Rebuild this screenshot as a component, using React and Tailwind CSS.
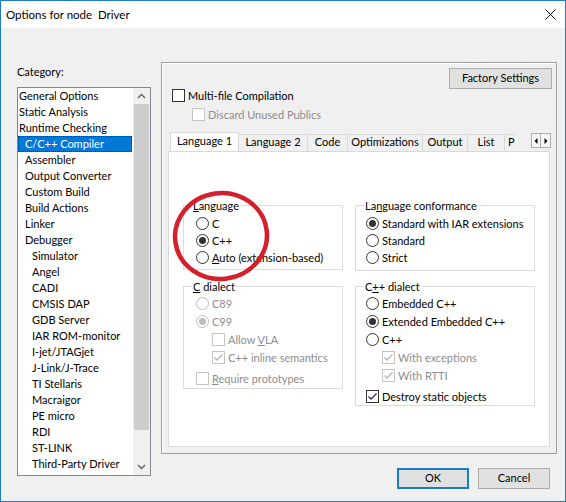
import React from "react";

// category list entries: [label, indent level, selected]
const categories = [
  ["General Options", 0],
  ["Static Analysis", 0],
  ["Runtime Checking", 0],
  ["C/C++ Compiler", 1, true],
  ["Assembler", 1],
  ["Output Converter", 1],
  ["Custom Build", 1],
  ["Build Actions", 1],
  ["Linker", 1],
  ["Debugger", 1],
  ["Simulator", 2],
  ["Angel", 2],
  ["CADI", 2],
  ["CMSIS DAP", 2],
  ["GDB Server", 2],
  ["IAR ROM-monitor", 2],
  ["I-jet/JTAGjet", 2],
  ["J-Link/J-Trace", 2],
  ["TI Stellaris", 2],
  ["Macraigor", 2],
  ["PE micro", 2],
  ["RDI", 2],
  ["ST-LINK", 2],
  ["Third-Party Driver", 2],
];

const indents = ["pl-[1px]", "pl-[7px]", "pl-[14px]"];

// inactive tabs after the selected one
const tabs = [
  ["Language 2", "w-[69px]"],
  ["Code", "w-[40px]"],
  ["Optimizations", "w-[75px]"],
  ["Output", "w-[45px]"],
  ["List", "w-[37px]"],
];

function Radio({ checked, disabled }) {
  return (
    <span
      className={
        disabled
          ? "flex h-[13px] w-[13px] shrink-0 items-center justify-center rounded-full border border-[#bcbcbc] bg-white"
          : "flex h-[13px] w-[13px] shrink-0 items-center justify-center rounded-full border border-[#333333] bg-white"
      }
    >
      {checked && (
        <span
          className={
            disabled
              ? "h-[7px] w-[7px] rounded-full bg-[#bcbcbc]"
              : "h-[7px] w-[7px] rounded-full bg-[#333333]"
          }
        />
      )}
    </span>
  );
}

function Check({ checked, disabled }) {
  return (
    <span
      className={
        disabled
          ? "flex h-[13px] w-[13px] shrink-0 items-center justify-center border border-[#c4c4c4] bg-white"
          : "flex h-[13px] w-[13px] shrink-0 items-center justify-center border border-[#333333] bg-white"
      }
    >
      {checked && (
        <svg width="11" height="11" viewBox="0 0 11 11">
          <polyline
            points="1.5,5.5 4,8 9.5,2.5"
            fill="none"
            stroke={disabled ? "#b4b4b4" : "#333333"}
            strokeWidth="1.3"
          />
        </svg>
      )}
    </span>
  );
}

function Row({ control, children, className }) {
  return (
    <div className={`flex items-center gap-[3px] whitespace-nowrap ${className}`}>
      {control}
      <span className="leading-[15px]">{children}</span>
    </div>
  );
}

function App() {
  return (
    <div className="relative flex h-[502px] w-[566px] flex-col border border-[#1f7bd1] bg-[#f0f0f0] font-['Lato','Noto_Sans',sans-serif] text-[11px] text-black">
      {/* title bar */}
      <div className="flex h-[27px] shrink-0 items-center justify-between bg-white pl-[5px] pr-[9px]">
        <span className="text-[11.5px]">Options for node&nbsp; Driver</span>
        <svg width="11" height="11" viewBox="0 0 11 11">
          <path d="M0.5 0.5 L10.5 10.5 M10.5 0.5 L0.5 10.5" stroke="#111" strokeWidth="1" />
        </svg>
      </div>

      {/* dialog body */}
      <div className="flex flex-1 pl-[16px]">
        {/* category column */}
        <div className="flex w-[134px] flex-col pt-[36px]">
          <span className="leading-[15px]">Category:</span>
          <div className="mt-[8px] flex h-[389px] border border-[#828790] bg-white">
            <div className="flex w-[115px] flex-col">
              {categories.map(([label, level, selected]) =>
                selected ? (
                  <div
                    key={label}
                    className="h-[16px] w-[114px] bg-[#0078d7] pl-[7px] leading-[16px] text-white outline-1 -outline-offset-1 outline-dotted outline-[#0d3463]"
                  >
                    {label}
                  </div>
                ) : (
                  <div key={label} className={`h-[16px] whitespace-nowrap leading-[16px] ${indents[level]}`}>
                    {label}
                  </div>
                )
              )}
            </div>
            {/* scrollbar */}
            <div className="flex w-[17px] flex-col bg-[#f0f0f0]">
              <div className="flex h-[16px] items-center justify-center">
                <svg width="9" height="6" viewBox="0 0 9 6">
                  <path d="M1 5 L4.5 1.5 L8 5" fill="none" stroke="#606060" strokeWidth="1.4" />
                </svg>
              </div>
              <div className="mx-[1px] h-[326px] bg-[#cdcdcd]" />
              <div className="flex-1" />
              <div className="flex h-[17px] items-center justify-center">
                <svg width="9" height="6" viewBox="0 0 9 6">
                  <path d="M1 1 L4.5 4.5 L8 1" fill="none" stroke="#606060" strokeWidth="1.4" />
                </svg>
              </div>
            </div>
          </div>
        </div>

        {/* options column */}
        <div className="ml-[10px] flex w-[396px] flex-col pt-[34px]">
          <div className="flex h-[392px] flex-col border border-[#a0a0a0] shadow-[inset_1px_1px_0_#ffffff]">
            <div className="flex justify-end pr-[4px] pt-[5px]">
              <div className="flex h-[21px] w-[103px] items-center justify-center border border-[#adadad] bg-[#e1e1e1]">
                Factory Settings
              </div>
            </div>
            <Row className="-mt-[1px] ml-[10px] h-[14px]" control={<Check />}>
              Multi-file Compilation
            </Row>
            <Row className="ml-[30px] mt-[5px] h-[15px] text-[#8d8d8d]" control={<Check disabled />}>
              Discard Unused Publics
            </Row>

            {/* tab strip */}
            <div className="mt-[10px] flex h-[19px] items-end pl-[8px] pr-[5px]">
              <div className="relative z-10 flex h-[19px] w-[69px] shrink-0 items-center justify-center border border-b-0 border-[#d9d9d9] bg-white pb-[2px]">
                Language 1
              </div>
              {tabs.map(([label, w]) => (
                <div
                  key={label}
                  className={`flex h-[17px] shrink-0 items-center justify-center border-r border-t border-[#d9d9d9] pb-[1px] ${w}`}
                >
                  {label}
                </div>
              ))}
              <div className="flex h-[17px] w-[10px] shrink-0 items-center border-t border-[#d9d9d9] pb-[1px] pl-[3px]">
                P
              </div>
              <div className="ml-auto mt-[1px] flex h-[15px] self-start">
                <div className="flex w-[10px] items-center justify-center border border-[#adadad] bg-[#f7f7f7]">
                  <svg width="4" height="6" viewBox="0 0 4 6">
                    <path d="M3.5 0 L0.5 3 L3.5 6 Z" fill="#000" />
                  </svg>
                </div>
                <div className="flex w-[10px] items-center justify-center border border-l-0 border-[#adadad] bg-[#f7f7f7]">
                  <svg width="4" height="6" viewBox="0 0 4 6">
                    <path d="M0.5 0 L3.5 3 L0.5 6 Z" fill="#000" />
                  </svg>
                </div>
              </div>
            </div>

            {/* tab page */}
            <div className="mx-[6px] mb-[6px] flex-1 border border-[#d9d9d9] bg-white pl-[14px] pt-[46px]">
              <div className="flex items-start gap-[12px]">
                <fieldset className="w-[160px] border border-[#dcdcdc]">
                  <legend className="ml-[8px] px-[1px] leading-[15px]">
                    <span className="underline">L</span>anguage
                  </legend>
                  <div className="pb-[3px] pl-[12px] pt-[2px]">
                    <Row className="h-[17px]" control={<Radio />}>C</Row>
                    <Row className="h-[17px]" control={<Radio checked />}>C++</Row>
                    <Row className="h-[17px]" control={<Radio />}>
                      <span className="underline">A</span>uto (extension-based)
                    </Row>
                  </div>
                </fieldset>
                <fieldset className="w-[180px] border border-[#dcdcdc]">
                  <legend className="ml-[8px] px-[1px] leading-[15px]">
                    La<span className="underline">n</span>guage conformance
                  </legend>
                  <div className="pb-[4px] pl-[10px] pt-[2px]">
                    <Row className="h-[17px]" control={<Radio checked />}>Standard with IAR extensions</Row>
                    <Row className="h-[17px]" control={<Radio />}>Standard</Row>
                    <Row className="h-[17px]" control={<Radio />}>Strict</Row>
                  </div>
                </fieldset>
              </div>

              <div className="mt-[8px] flex items-start gap-[12px]">
                <fieldset className="w-[160px] border border-[#dcdcdc]">
                  <legend className="ml-[8px] px-[1px] leading-[15px]">
                    <span className="underline">C</span> dialect
                  </legend>
                  <div className="pb-[1px] pl-[12px] text-[#8d8d8d]">
                    <Row className="h-[18px]" control={<Radio disabled />}>C89</Row>
                    <Row className="h-[18px]" control={<Radio checked disabled />}>C99</Row>
                    <Row className="h-[18px] pl-[16px]" control={<Check disabled />}>
                      Allow <span className="underline">V</span>LA
                    </Row>
                    <Row className="h-[18px] pl-[16px]" control={<Check checked disabled />}>
                      C++ inline semantics
                    </Row>
                    <Row className="mt-[3px] h-[18px]" control={<Check disabled />}>
                      <span className="underline">R</span>equire prototypes
                    </Row>
                  </div>
                </fieldset>
                <fieldset className="w-[180px] border border-[#dcdcdc]">
                  <legend className="ml-[8px] px-[1px] leading-[15px]">
                    C<span className="underline">+</span>+ dialect
                  </legend>
                  <div className="pl-[10px]">
                    <Row className="h-[18px]" control={<Radio />}>Embedded C++</Row>
                    <Row className="h-[18px]" control={<Radio checked />}>Extended Embedded C++</Row>
                    <Row className="h-[18px]" control={<Radio />}>C++</Row>
                    <Row className="h-[18px] pl-[16px] text-[#8d8d8d]" control={<Check checked disabled />}>
                      With exceptions
                    </Row>
                    <Row className="h-[18px] pl-[16px] text-[#8d8d8d]" control={<Check checked disabled />}>
                      With RTTI
                    </Row>
                    <Row className="mt-[3px] h-[18px]" control={<Check checked />}>
                      Destroy static objects
                    </Row>
                  </div>
                </fieldset>
              </div>
            </div>
          </div>

          {/* dialog buttons */}
          <div className="mt-[14px] flex justify-end gap-[9px] pr-[7px]">
            <div className="flex h-[21px] w-[72px] items-center justify-center border-2 border-[#1979ca] bg-[#e1e1e1]">
              OK
            </div>
            <div className="flex h-[21px] w-[72px] items-center justify-center border border-[#adadad] bg-[#e1e1e1]">
              Cancel
            </div>
          </div>
        </div>
      </div>

      {/* red hand-drawn highlight round the Language group */}
      <svg className="pointer-events-none absolute left-[168px] top-[186px]" width="104" height="98" viewBox="0 0 104 98">
        <ellipse cx="52" cy="49" rx="46" ry="43" fill="none" stroke="#d3202a" strokeWidth="4.5" transform="rotate(-8 52 49)" />
      </svg>
    </div>
  );
}

export default App;
